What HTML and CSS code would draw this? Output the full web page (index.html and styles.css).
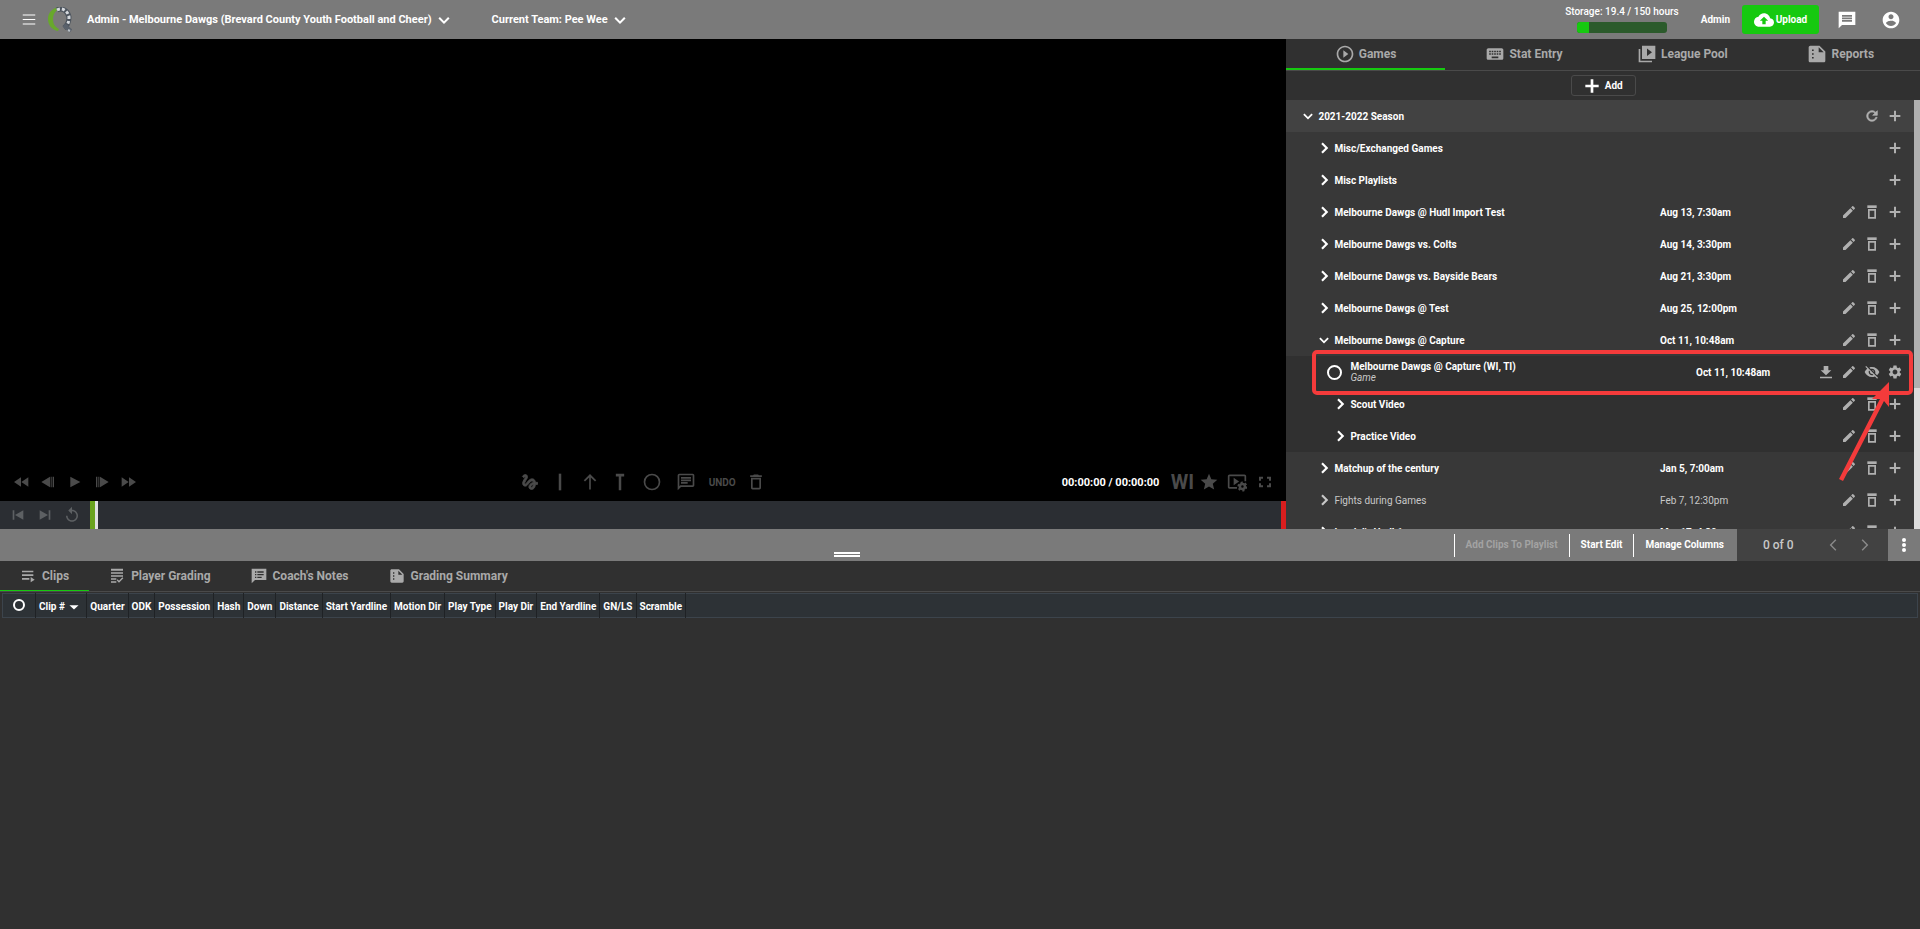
FILE: index.html
```html
<!DOCTYPE html>
<html lang="en">
<head>
  <meta charset="UTF-8">
  <meta name="viewport" content="width=device-width, initial-scale=1.0">
  <title>Game Video</title>
  <link rel="stylesheet" href="styles.css">
</head>
<body>
  <!-- Icon sprite -->
  <svg class="sprite" aria-hidden="true">
    <symbol id="menu" viewBox="0 0 24 24"><path d="M2 4h20v1.600H2zM2 11.200h20v1.600H2zM2 18.400h20V20H2z"/></symbol>
    <symbol id="down" viewBox="0 0 24 24"><path d="M2.500 9.500 5 7l7 7 7-7 2.500 2.500L12 19z"/></symbol>
    <symbol id="right" viewBox="0 0 24 24"><path d="M6.500 4 9.500 1l11 11-11 11-3-3 8-8z"/></symbol>
    <symbol id="cloud" viewBox="0 0 24 24"><path d="M19.350 10.040C18.670 6.590 15.640 4 12 4 9.110 4 6.600 5.640 5.350 8.040 2.340 8.360 0 10.910 0 14c0 3.310 2.690 6 6 6h13c2.760 0 5-2.240 5-5 0-2.640-2.050-4.780-4.650-4.960zM14 13v4h-4v-4H7l5-5 5 5h-3z"/></symbol>
    <symbol id="chat" viewBox="0 0 24 24"><path d="M22 2H2v20l4-4h16V2zM6 9h12v2H6V9zm12 5H6v-2h12v2zm0-6H6V6h12v2z"/></symbol>
    <symbol id="account" viewBox="0 0 24 24"><path d="M12 2C6.480 2 2 6.480 2 12s4.480 10 10 10 10-4.480 10-10S17.520 2 12 2zm0 3c1.660 0 3 1.340 3 3s-1.340 3-3 3-3-1.340-3-3 1.340-3 3-3zm0 14.200c-2.500 0-4.710-1.280-6-3.220.030-1.990 4-3.080 6-3.080 1.990 0 5.970 1.090 6 3.080-1.290 1.940-3.500 3.220-6 3.220z"/></symbol>
    <symbol id="play-circle" viewBox="0 0 24 24"><path d="M10 16.500l6-4.500-6-4.500v9zM12 2C6.480 2 2 6.480 2 12s4.480 10 10 10 10-4.480 10-10S17.520 2 12 2zm0 18c-4.410 0-8-3.590-8-8s3.590-8 8-8 8 3.590 8 8-3.590 8-8 8z"/></symbol>
    <symbol id="keyboard" viewBox="0 0 24 24"><path d="M20 5H4c-1.100 0-2 .9-2 2v10c0 1.100.9 2 2 2h16c1.100 0 2-.9 2-2V7c0-1.100-.9-2-2-2zm-9 3h2v2h-2V8zm0 3h2v2h-2v-2zM8 8h2v2H8V8zm0 3h2v2H8v-2zm-1 2H5v-2h2v2zm0-3H5V8h2v2zm9 7H8v-2h8v2zm0-4h-2v-2h2v2zm0-3h-2V8h2v2zm3 3h-2v-2h2v2zm0-3h-2V8h2v2z"/></symbol>
    <symbol id="library" viewBox="0 0 24 24"><path d="M4 6H2v16h16v-2H4V6zm18-4H6v16h16V2zM12 14.500v-9l6 4.500-6 4.500z"/></symbol>
    <symbol id="report" viewBox="0 0 24 24"><path d="M15 2H4C2.900 2 2 2.900 2 4v16c0 1.100.9 2 2 2h16c1.100 0 2-.9 2-2V9l-7-7zM8 17.500H6v-2h2zM8 13H6v-2h2zM8 8.500H6v-2h2zM14 10V4l6 6z"/></symbol>
    <symbol id="plus" viewBox="0 0 24 24"><path d="M20 13.500h-6.500V20h-3v-6.500H4v-3h6.500V4h3v6.500H20z"/></symbol>
    <symbol id="plus-bold" viewBox="0 0 24 24"><path d="M22 14h-8v8h-4v-8H2v-4h8V2h4v8h8z"/></symbol>
    <symbol id="refresh" viewBox="0 0 24 24"><path d="M17.650 6.350C16.200 4.900 14.210 4 12 4c-4.420 0-7.990 3.580-7.990 8s3.570 8 7.990 8c3.730 0 6.840-2.550 7.730-6h-2.080c-.82 2.330-3.040 4-5.650 4-3.310 0-6-2.690-6-6s2.690-6 6-6c1.660 0 3.140.69 4.220 1.780L13 11h7V4l-2.350 2.350z" stroke="currentColor"/></symbol>
    <symbol id="pencil" viewBox="0 0 24 24"><path d="M3 17.250V21h3.750L17.810 9.940l-3.750-3.750L3 17.250zM20.710 7.040c.39-.39.39-1.020 0-1.410l-2.340-2.340c-.39-.39-1.020-.39-1.410 0l-1.830 1.830 3.750 3.750 1.830-1.830z"/></symbol>
    <symbol id="trash" viewBox="0 0 24 24"><path d="M6 19c0 1.100.9 2 2 2h8c1.100 0 2-.9 2-2V7H6v12zM8 9h8v10H8V9zm7.500-5l-1-1h-5l-1 1H5v2h14V4z"/></symbol>
    <symbol id="trash-square" viewBox="0 0 24 24"><path d="M5 2h14v4H5z"/><path fill-rule="evenodd" d="M6 7.500h12V22H6zM8.500 10v9.500h7V10z"/></symbol>
    <symbol id="download" viewBox="0 0 24 24"><path d="M20 9.500h-4.500V3h-7v6.500H4l8 7.500 8-7.500zM3 19v2.500h18V19H3z"/></symbol>
    <symbol id="eye-off" viewBox="0 0 24 24"><path d="M12 7c2.760 0 5 2.240 5 5 0 .65-.13 1.260-.36 1.830l2.920 2.920c1.510-1.260 2.700-2.890 3.430-4.750-1.730-4.390-6-7.500-11-7.500-1.400 0-2.740.25-3.980.7l2.160 2.160C10.740 7.130 11.350 7 12 7zM2 4.270l2.280 2.280.46.46C3.080 8.300 1.780 10.020 1 12c1.730 4.390 6 7.500 11 7.500 1.550 0 3.030-.3 4.380-.84l.42.42L19.730 22 21 20.730 3.270 3 2 4.270zM7.530 9.800l1.550 1.550c-.05.21-.08.43-.08.65 0 1.660 1.340 3 3 3 .22 0 .44-.03.65-.08l1.550 1.550c-.67.33-1.410.53-2.200.53-2.760 0-5-2.240-5-5 0-.79.2-1.530.53-2.200zm4.310-.78l3.150 3.150.02-.16c0-1.660-1.340-3-3-3l-.17.010z"/></symbol>
    <symbol id="gear" viewBox="0 0 24 24"><path d="M19.140 12.940c.04-.3.06-.61.06-.94 0-.32-.02-.64-.07-.94l2.030-1.580c.18-.14.23-.41.12-.61l-1.920-3.320c-.12-.22-.37-.29-.59-.22l-2.390.96c-.5-.38-1.030-.7-1.620-.94l-.36-2.540c-.04-.24-.24-.41-.48-.41h-3.840c-.24 0-.43.17-.47.41l-.36 2.540c-.59.24-1.130.57-1.620.94l-2.390-.96c-.22-.08-.47 0-.59.22L2.740 8.870c-.12.21-.08.47.12.61l2.030 1.580c-.05.3-.09.63-.09.94s.02.64.07.94l-2.030 1.580c-.18.14-.23.41-.12.61l1.920 3.320c.12.22.37.29.59.22l2.390-.96c.5.38 1.030.7 1.620.94l.36 2.540c.05.24.24.41.48.41h3.840c.24 0 .44-.17.47-.41l.36-2.540c.59-.24 1.130-.56 1.620-.94l2.390.96c.22.08.47 0 .59-.22l1.920-3.320c.12-.22.07-.47-.12-.61l-2.010-1.580zM12 15.600c-1.980 0-3.600-1.620-3.600-3.600s1.620-3.600 3.600-3.600 3.600 1.620 3.600 3.600-1.620 3.600-3.600 3.600z"/></symbol>
    <symbol id="rewind" viewBox="0 0 24 24"><path d="M12 19V5L1.500 12zM23 19V5l-10.500 7z"/></symbol>
    <symbol id="forward" viewBox="0 0 24 24"><path d="M1 19l10.500-7L1 5zM12 5v14l10.500-7z"/></symbol>
    <symbol id="frame-back" viewBox="0 0 24 24"><path d="M15 20V4L2 12zM16 4h1.500v16H16zM19 4h2v16h-2z"/></symbol>
    <symbol id="frame-next" viewBox="0 0 24 24"><path d="M9 20V4l13 8zM6.500 4H8v16H6.500zM3 4h2v16H3z"/></symbol>
    <symbol id="play" viewBox="0 0 24 24"><path d="M5 4v16l15-8z"/></symbol>
    <symbol id="skip-prev" viewBox="0 0 24 24"><path d="M4 5h2.500v14H4zM20 5v14L7.500 12z"/></symbol>
    <symbol id="skip-next" viewBox="0 0 24 24"><path d="M4 19l12.500-7L4 5zM17.500 5H20v14h-2.500z"/></symbol>
    <symbol id="replay" viewBox="0 0 24 24"><path d="M12 5V1L7 6l5 5V7c3.310 0 6 2.690 6 6s-2.690 6-6 6-6-2.690-6-6H4c0 4.420 3.580 8 8 8s8-3.580 8-8-3.580-8-8-8z"/></symbol>
    <symbol id="gesture" viewBox="0 0 24 24"><path stroke="currentColor" d="M4.590 6.890c.7-.71 1.400-1.350 1.710-1.220.5.200 0 1.030-.3 1.520-.25.42-2.860 3.890-2.860 6.310 0 1.280.48 2.340 1.340 2.980.75.56 1.740.73 2.640.46 1.070-.31 1.950-1.400 3.060-2.770 1.210-1.490 2.830-3.440 4.080-3.440 1.630 0 1.650 1.010 1.760 1.790-3.780.64-5.380 3.670-5.380 5.370 0 1.700 1.440 3.090 3.210 3.090 1.630 0 4.290-1.330 4.690-6.100H21v-2.500h-2.470c-.15-1.650-1.090-4.200-4.030-4.200-2.250 0-4.180 1.910-4.940 2.840-.58.73-2.060 2.480-2.290 2.720-.25.300-.68.840-1.110.840-.45 0-.72-.83-.36-1.920.35-1.090 1.400-2.860 1.850-3.520.78-1.140 1.300-1.920 1.300-3.280C8.950 3.690 7.310 3 6.440 3 5.120 3 3.970 4 3.720 4.250c-.36.36-.66.66-.88.93l1.750 1.710zm9.290 11.660c-.31 0-.74-.26-.74-.72 0-.6.73-2.200 2.870-2.760-.300 2.690-1.430 3.480-2.130 3.480z"/></symbol>
    <symbol id="line" viewBox="0 0 24 24"><path d="M10.500 2h3v20h-3z"/></symbol>
    <symbol id="arrow-up" viewBox="0 0 24 24"><path d="M11 21h2V6.500l5 5 1.500-1.500L12 2.500 4.500 10 6 11.500l5-5z"/></symbol>
    <symbol id="letter-t" viewBox="0 0 24 24"><path d="M7 2h10v3.500h-3.500V22h-3V5.500H7z"/></symbol>
    <symbol id="circle" viewBox="0 0 24 24"><circle cx="12" cy="12" r="9" fill="none" stroke="currentColor" stroke-width="2"/></symbol>
    <symbol id="comment" viewBox="0 0 24 24"><path d="M20 2H4c-1.100 0-2 .9-2 2v18l4-4h14c1.100 0 2-.9 2-2V4c0-1.100-.9-2-2-2zm0 14H5.170L4 17.170V4h16v12zM6 12h8v2H6zM6 9h12v2H6zM6 6h12v2H6z"/></symbol>
    <symbol id="star" viewBox="0 0 24 24"><path d="M12 17.270L18.180 21l-1.640-7.030L22 9.240l-7.190-.61L12 2 9.190 8.630 2 9.240l5.460 4.730L5.820 21z"/></symbol>
    <symbol id="video-settings" viewBox="0 0 24 24"><path d="M3 5h18v6h2V5c0-1.100-.9-2-2-2H3c-1.100 0-2 .9-2 2v13c0 1.100.9 2 2 2h9v-2H3V5zM8 7v9l6.500-4.500z"/><circle cx="18.500" cy="17.500" r="3" fill="none" stroke="currentColor" stroke-width="3"/><circle cx="18.500" cy="17.500" r="5" fill="none" stroke="currentColor" stroke-width="2" stroke-dasharray="2.600 2.600"/></symbol>
    <symbol id="fullscreen" viewBox="0 0 24 24"><path d="M3 4h6v3H6v3H3zM15 4h6v6h-3V7h-3zM3 14h3v3h3v3H3zM18 14h3v6h-6v-3h3z"/></symbol>
    <symbol id="clips" viewBox="0 0 24 24"><path d="M3 4h17v2.500H3zM3 9.500h17V12H3zM3 15h11v2.500H3zM16 13.500v8l6-4z"/></symbol>
    <symbol id="grading" viewBox="0 0 24 24"><path d="M3 1h18v3H3zM3 6.500h18v2H3zM3 11h18v2H3zM3 15.500h8v2H3zM3 20h8v2H3zM15 22l-3.500-3.500L13 17l2 2 5-5 1.500 1.500z"/></symbol>
    <symbol id="notes" viewBox="0 0 24 24"><path fill-rule="evenodd" d="M23 1H1v22l5-5h17zM6 5h2v2H6zM9.500 5H19v2H9.500zM6 9h2v2H6zM9.500 9H19v2H9.500zM6 13h2v2H6zM9.500 13H16v2H9.500z"/></symbol>
    <symbol id="prev" viewBox="0 0 24 24"><path d="M15.500 3.500 17 5l-7 7 7 7-1.500 1.500L7 12z"/></symbol>
    <symbol id="next" viewBox="0 0 24 24"><path d="M8.500 3.500 7 5l7 7-7 7 1.500 1.500L17 12z"/></symbol>
    <symbol id="kebab" viewBox="0 0 24 24"><circle cx="12" cy="4.500" r="3"/><circle cx="12" cy="12" r="3"/><circle cx="12" cy="19.500" r="3"/></symbol>
    <symbol id="sort" viewBox="0 0 24 24"><path d="M1 8h22L12 18z"/></symbol>
  </svg>

  <header class="topbar">
    <button class="icon-btn menu-btn" aria-label="Menu"><svg><use href="#menu"/></svg></button>
    <a class="logo" href="#" aria-label="Home">
      <svg viewBox="0 0 24 26">
        <path d="M11 0C4 1 0 6 0 12c0 6 4 11 10 12l1-2c-4-2-6-5-6-10 0-4 2-8 6-10z" fill="#68a82c"/>
        <path d="M9 3c5-3 11 1 12 7 0 5-1 8-5 11" fill="none" stroke="#4c545d" stroke-width="5"/>
        <path d="M9 3c5-3 11 1 12 7 0 5-1 8-5 11" fill="none" stroke="#d5d9dd" stroke-width="3" stroke-dasharray="3 2"/>
        <path d="M16 18l7 6" stroke="#59616b" stroke-width="4"/>
        <path d="M20 23l2 1" stroke="#b9c0c6" stroke-width="2"/>
      </svg>
    </a>
    <button class="picker">Admin - Melbourne Dawgs (Brevard County Youth Football and Cheer)<svg><use href="#down"/></svg></button>
    <button class="picker team">Current Team: Pee Wee<svg><use href="#down"/></svg></button>
    <div class="storage">
      <span>Storage: 19.4 / 150 hours</span>
      <div class="storage-bar"><div class="storage-used" style="width: 13%"></div></div>
    </div>
    <a class="admin-link" href="#">Admin</a>
    <button class="upload"><svg><use href="#cloud"/></svg>Upload</button>
    <button class="icon-btn chat-btn" aria-label="Messages"><svg><use href="#chat"/></svg></button>
    <button class="icon-btn account-btn" aria-label="Account"><svg><use href="#account"/></svg></button>
  </header>

  <main class="workspace">
    <section class="player">
      <div class="screen"></div>
      <div class="controls">
        <div class="transport">
          <button aria-label="Rewind"><svg><use href="#rewind"/></svg></button>
          <button aria-label="Previous frame"><svg><use href="#frame-back"/></svg></button>
          <button aria-label="Play"><svg><use href="#play"/></svg></button>
          <button aria-label="Next frame"><svg><use href="#frame-next"/></svg></button>
          <button aria-label="Fast forward"><svg><use href="#forward"/></svg></button>
        </div>
        <div class="drawing">
          <button class="slim" aria-label="Freehand"><svg><use href="#gesture"/></svg></button>
          <button class="slim" aria-label="Line"><svg><use href="#line"/></svg></button>
          <button class="slim" aria-label="Arrow"><svg><use href="#arrow-up"/></svg></button>
          <button class="slim" aria-label="T line"><svg><use href="#letter-t"/></svg></button>
          <button aria-label="Circle"><svg><use href="#circle"/></svg></button>
          <button aria-label="Comment"><svg><use href="#comment"/></svg></button>
          <button class="undo">UNDO</button>
          <button class="slim" aria-label="Clear"><svg><use href="#trash"/></svg></button>
        </div>
        <div class="view">
          <span class="time">00:00:00 / 00:00:00</span>
          <button class="angle">WI</button>
          <button aria-label="Favorite"><svg><use href="#star"/></svg></button>
          <button aria-label="Video settings"><svg><use href="#video-settings"/></svg></button>
          <button aria-label="Fullscreen"><svg class="full"><use href="#fullscreen"/></svg></button>
        </div>
      </div>
      <div class="scrub">
        <div class="scrub-buttons">
          <button aria-label="Previous clip"><svg><use href="#skip-prev"/></svg></button>
          <button aria-label="Next clip"><svg><use href="#skip-next"/></svg></button>
          <button aria-label="Replay"><svg class="replay"><use href="#replay"/></svg></button>
        </div>
        <div class="track"></div>
      </div>
    </section>

    <aside class="library">
      <nav class="library-tabs">
        <a class="active" href="#"><svg><use href="#play-circle"/></svg>Games</a>
        <a href="#"><svg><use href="#keyboard"/></svg>Stat Entry</a>
        <a href="#"><svg><use href="#library"/></svg>League Pool</a>
        <a href="#"><svg><use href="#report"/></svg>Reports</a>
      </nav>
      <div class="add-bar">
        <button class="add"><svg><use href="#plus-bold"/></svg>Add</button>
      </div>
      <div class="tree-wrap">
        <div class="tree">
          <div class="row season">
            <button class="name"><svg><use href="#down"/></svg>2021-2022 Season</button>
            <div class="actions">
              <button aria-label="Refresh"><svg><use href="#refresh"/></svg></button>
              <button aria-label="Add"><svg><use href="#plus"/></svg></button>
            </div>
          </div>
          <div class="row">
            <button class="name"><svg><use href="#right"/></svg>Misc/Exchanged Games</button>
            <div class="actions"><button aria-label="Add"><svg><use href="#plus"/></svg></button></div>
          </div>
          <div class="row">
            <button class="name"><svg><use href="#right"/></svg>Misc Playlists</button>
            <div class="actions"><button aria-label="Add"><svg><use href="#plus"/></svg></button></div>
          </div>
          <div class="row">
            <button class="name"><svg><use href="#right"/></svg>Melbourne Dawgs @ Hudl Import Test</button>
            <span class="date">Aug 13, 7:30am</span>
            <div class="actions">
              <button aria-label="Edit"><svg><use href="#pencil"/></svg></button>
              <button aria-label="Delete"><svg><use href="#trash-square"/></svg></button>
              <button aria-label="Add"><svg><use href="#plus"/></svg></button>
            </div>
          </div>
          <div class="row">
            <button class="name"><svg><use href="#right"/></svg>Melbourne Dawgs vs. Colts</button>
            <span class="date">Aug 14, 3:30pm</span>
            <div class="actions">
              <button aria-label="Edit"><svg><use href="#pencil"/></svg></button>
              <button aria-label="Delete"><svg><use href="#trash-square"/></svg></button>
              <button aria-label="Add"><svg><use href="#plus"/></svg></button>
            </div>
          </div>
          <div class="row">
            <button class="name"><svg><use href="#right"/></svg>Melbourne Dawgs vs. Bayside Bears</button>
            <span class="date">Aug 21, 3:30pm</span>
            <div class="actions">
              <button aria-label="Edit"><svg><use href="#pencil"/></svg></button>
              <button aria-label="Delete"><svg><use href="#trash-square"/></svg></button>
              <button aria-label="Add"><svg><use href="#plus"/></svg></button>
            </div>
          </div>
          <div class="row">
            <button class="name"><svg><use href="#right"/></svg>Melbourne Dawgs @ Test</button>
            <span class="date">Aug 25, 12:00pm</span>
            <div class="actions">
              <button aria-label="Edit"><svg><use href="#pencil"/></svg></button>
              <button aria-label="Delete"><svg><use href="#trash-square"/></svg></button>
              <button aria-label="Add"><svg><use href="#plus"/></svg></button>
            </div>
          </div>
          <div class="row">
            <button class="name"><svg><use href="#down"/></svg>Melbourne Dawgs @ Capture</button>
            <span class="date">Oct 11, 10:48am</span>
            <div class="actions">
              <button aria-label="Edit"><svg><use href="#pencil"/></svg></button>
              <button aria-label="Delete"><svg><use href="#trash-square"/></svg></button>
              <button aria-label="Add"><svg><use href="#plus"/></svg></button>
            </div>
          </div>
          <div class="row child game">
            <label class="game-name">
              <input class="round" type="checkbox">
              <span>Melbourne Dawgs @ Capture (WI, TI)<em>Game</em></span>
            </label>
            <span class="date">Oct 11, 10:48am</span>
            <div class="actions">
              <button aria-label="Download"><svg><use href="#download"/></svg></button>
              <button aria-label="Edit"><svg><use href="#pencil"/></svg></button>
              <button aria-label="Hide"><svg><use href="#eye-off"/></svg></button>
              <button aria-label="Settings"><svg><use href="#gear"/></svg></button>
            </div>
            <div class="callout"></div>
            <svg class="callout-arrow" viewBox="0 0 64 108">
              <path d="M55 4 38 21l8 0L5 101l4 2 41-80 5 6z"/>
            </svg>
          </div>
          <div class="row child">
            <button class="name"><svg><use href="#right"/></svg>Scout Video</button>
            <div class="actions">
              <button aria-label="Edit"><svg><use href="#pencil"/></svg></button>
              <button aria-label="Delete"><svg><use href="#trash-square"/></svg></button>
              <button aria-label="Add"><svg><use href="#plus"/></svg></button>
            </div>
          </div>
          <div class="row child">
            <button class="name"><svg><use href="#right"/></svg>Practice Video</button>
            <div class="actions">
              <button aria-label="Edit"><svg><use href="#pencil"/></svg></button>
              <button aria-label="Delete"><svg><use href="#trash-square"/></svg></button>
              <button aria-label="Add"><svg><use href="#plus"/></svg></button>
            </div>
          </div>
          <div class="row">
            <button class="name"><svg><use href="#right"/></svg>Matchup of the century</button>
            <span class="date">Jan 5, 7:00am</span>
            <div class="actions">
              <button aria-label="Edit"><svg><use href="#pencil"/></svg></button>
              <button aria-label="Delete"><svg><use href="#trash-square"/></svg></button>
              <button aria-label="Add"><svg><use href="#plus"/></svg></button>
            </div>
          </div>
          <div class="row muted">
            <button class="name"><svg><use href="#right"/></svg>Fights during Games</button>
            <span class="date">Feb 7, 12:30pm</span>
            <div class="actions">
              <button aria-label="Edit"><svg><use href="#pencil"/></svg></button>
              <button aria-label="Delete"><svg><use href="#trash-square"/></svg></button>
              <button aria-label="Add"><svg><use href="#plus"/></svg></button>
            </div>
          </div>
          <div class="row">
            <button class="name"><svg><use href="#right"/></svg>Landol's Hudl 1</button>
            <span class="date">Mar 17, 4:30pm</span>
            <div class="actions">
              <button aria-label="Edit"><svg><use href="#pencil"/></svg></button>
              <button aria-label="Delete"><svg><use href="#trash-square"/></svg></button>
              <button aria-label="Add"><svg><use href="#plus"/></svg></button>
            </div>
          </div>
        </div>
        <div class="scrollbar"><div class="thumb"></div></div>
      </div>
    </aside>
  </main>

  <div class="splitter">
    <div class="grip"></div>
    <div class="tools">
      <button disabled>Add Clips To Playlist</button>
      <button>Start Edit</button>
      <button>Manage Columns</button>
    </div>
    <div class="pager">
      <span>0 of 0</span>
      <button aria-label="Previous"><svg><use href="#prev"/></svg></button>
      <button aria-label="Next"><svg><use href="#next"/></svg></button>
    </div>
    <button class="more" aria-label="More"><svg><use href="#kebab"/></svg></button>
  </div>

  <section class="clips">
    <nav class="clip-tabs">
      <a class="active" href="#"><svg><use href="#clips"/></svg>Clips</a>
      <a href="#"><svg><use href="#grading"/></svg>Player Grading</a>
      <a href="#"><svg><use href="#notes"/></svg>Coach's Notes</a>
      <a href="#"><svg><use href="#report"/></svg>Grading Summary</a>
    </nav>
    <table class="clip-table">
      <thead>
        <tr>
          <th class="pick"><input class="round" type="checkbox" aria-label="Select all clips"></th>
          <th class="sorted">Clip # <svg><use href="#sort"/></svg></th>
          <th>Quarter</th>
          <th>ODK</th>
          <th>Possession</th>
          <th>Hash</th>
          <th>Down</th>
          <th>Distance</th>
          <th>Start Yardline</th>
          <th>Motion Dir</th>
          <th>Play Type</th>
          <th>Play Dir</th>
          <th>End Yardline</th>
          <th>GN/LS</th>
          <th>Scramble</th>
          <th class="rest"></th>
        </tr>
      </thead>
    </table>
  </section>
</body>
</html>
```

FILE: styles.css
```css
* {
  margin: 0;
  padding: 0;
  box-sizing: border-box;
}

html,
body {
  height: 100%;
}

body {
  display: flex;
  flex-direction: column;
  overflow: hidden;
  font-family: Roboto, "Liberation Sans", sans-serif;
  font-size: 10px;
  font-weight: 700;
  color: #fff;
  background: #303030;
}

button {
  display: flex;
  align-items: center;
  justify-content: center;
  font: inherit;
  color: inherit;
  background: none;
  border: 0;
  cursor: pointer;
}

a {
  color: inherit;
  text-decoration: none;
}

svg {
  display: block;
  flex: none;
  width: 16px;
  height: 16px;
  fill: currentColor;
}

.sprite {
  position: absolute;
  width: 0;
  height: 0;
}

/* Round tick boxes */
.round {
  appearance: none;
  display: block;
  flex: none;
  width: 12px;
  height: 12px;
  border: 2px solid #fff;
  border-radius: 50%;
}

/* Top bar */
.topbar {
  display: flex;
  align-items: center;
  flex: none;
  height: 39px;
  padding-left: 20px;
  background: #7a7a7a;
}

.logo {
  margin-left: 10px;
}

.logo svg {
  width: 24px;
  height: 26px;
}

.picker {
  gap: 5px;
  margin-left: 15px;
  font-size: 11px;
}

.picker svg {
  width: 14px;
  height: 14px;
}

.team {
  margin-left: 41px;
}

.storage {
  display: flex;
  flex-direction: column;
  align-items: center;
  gap: 5px;
  margin-left: auto;
  margin-right: 22px;
  font-weight: 500;
}

.storage-bar {
  width: 90px;
  height: 11px;
  overflow: hidden;
  background: #2b5a2b;
  border-radius: 3px;
}

.storage-used {
  height: 100%;
  background: #16c910;
}

.admin-link {
  margin-right: 12px;
}

.upload {
  gap: 2px;
  width: 77px;
  height: 29px;
  background: #16c910;
  border-radius: 3px;
}

.upload svg,
.icon-btn svg {
  width: 20px;
  height: 20px;
}

.icon-btn.menu-btn svg {
  width: 18px;
  height: 15px;
}

.chat-btn {
  width: 56px;
}

.account-btn {
  width: 32px;
  margin-right: 13px;
}

/* Video and library */
.workspace {
  display: flex;
  flex: 4 1 0;
  min-height: 0;
}

.player {
  display: flex;
  flex-direction: column;
  width: 67%;
  background: #000;
}

.screen {
  flex: 1;
}

.controls {
  display: grid;
  grid-template-columns: 1fr auto 1fr;
  align-items: center;
  height: 38px;
  padding: 0 7px;
  color: #4a4a4a;
}

.transport,
.drawing,
.view,
.scrub-buttons {
  display: flex;
  align-items: center;
}

.transport button,
.scrub-buttons button {
  width: 27px;
}

.drawing button {
  width: 34px;
}

.drawing .slim {
  width: 30px;
}

.drawing svg,
.view svg {
  width: 20px;
  height: 20px;
}

.view {
  justify-content: flex-end;
}

.view button {
  width: 28px;
}

.view .full {
  width: 16px;
  height: 16px;
}

.drawing .undo {
  width: 38px;
}

.time {
  margin-right: 10px;
  font-size: 11px;
  color: #fff;
}

.view .angle {
  width: 26px;
  font-size: 20px;
}

.scrub {
  display: flex;
  height: 28px;
  color: #5d6063;
  background: #2b2e33;
}

.scrub-buttons {
  width: 90px;
  padding-left: 4px;
}

.scrub-buttons .replay {
  width: 18px;
  height: 18px;
}

.track {
  flex: 1;
  border-left: 5px solid #6aa31d;
  border-right: 5px solid #d91e1e;
  box-shadow: inset 3px 0 #e0e0e0;
}

.library {
  display: flex;
  flex: 1;
  flex-direction: column;
  min-width: 0;
}

.library-tabs {
  display: grid;
  grid-template-columns: repeat(4, 1fr);
  height: 32px;
  font-size: 12px;
  color: #a9a9a9;
  border-bottom: 1px solid #4a4a4a;
}

.library-tabs a {
  display: flex;
  align-items: center;
  justify-content: center;
  gap: 4px;
  border-bottom: 2px solid transparent;
}

.library-tabs svg {
  width: 20px;
  height: 20px;
}

.library-tabs .active,
.clip-tabs .active {
  border-bottom-color: #16c910;
}

.add-bar {
  display: flex;
  align-items: center;
  justify-content: center;
  height: 29px;
}

.add {
  gap: 5px;
  width: 65px;
  height: 21px;
  border: 1px solid #4a4a4a;
  border-radius: 3px;
}

.tree-wrap {
  display: flex;
  flex: 1;
  min-height: 0;
}

.tree {
  flex: 1;
  overflow: hidden;
}

.scrollbar {
  width: 6px;
  background: #dcdcdc;
}

.thumb {
  height: 67%;
  background: #b0b0b0;
}

/* Tree rows, each level is 16px further in */
.row {
  display: flex;
  align-items: center;
  height: 32px;
  padding: 0 8px 0 32px;
  background: #383838;
}

.row.season {
  padding-left: 16px;
  background: #424242;
}

.row.child {
  padding-left: 48px;
  background: #303030;
}

.name {
  flex: 1;
  justify-content: flex-start;
  gap: 4px;
}

.name svg {
  width: 12px;
  height: 12px;
}

.date {
  width: 154px;
}

.actions {
  display: flex;
  justify-content: flex-end;
  width: 92px;
  color: #b0b0b0;
}

.actions button {
  width: 23px;
}

.muted {
  font-weight: 400;
  color: #c8c8c8;
}

.row.game {
  position: relative;
  padding-left: 41px;
}

.game .date {
  width: 118px;
}

.game-name {
  display: flex;
  flex: 1;
  align-items: center;
  gap: 8px;
}

.game-name .round {
  width: 15px;
  height: 15px;
}

.game-name em {
  display: block;
  font-weight: 400;
  color: #c8c8c8;
}

.callout {
  position: absolute;
  inset: -6px 1px -7px 26px;
  border: 4px solid #f43b3b;
  border-radius: 5px;
}

.callout-arrow {
  position: absolute;
  top: 22px;
  right: 16px;
  z-index: 2;
  width: 64px;
  height: 108px;
  fill: #f43b3b;
}

/* Grey bar between the two halves */
.splitter {
  position: relative;
  display: flex;
  align-items: center;
  justify-content: flex-end;
  flex: none;
  height: 32px;
  background: #7a7a7a;
}

.grip {
  position: absolute;
  bottom: 4px;
  left: 50%;
  width: 26px;
  height: 5px;
  margin-left: -126px;
  border: solid #fff;
  border-width: 2px 0;
}

.tools {
  display: flex;
  padding-right: 2px;
}

.tools button {
  height: 23px;
  padding: 0 11px 2px;
  border-left: 1px solid #fff;
}

.tools button:disabled {
  color: #a3a3a3;
}

.pager {
  display: flex;
  align-items: center;
  width: 151px;
  height: 100%;
  padding-left: 26px;
  font-size: 12px;
  font-weight: 500;
  color: #c8c8c8;
  background: #424242;
}

.pager span {
  flex: 1;
}

.pager button {
  width: 32px;
  color: #8a8a8a;
}

.pager button:last-child {
  margin-right: 7px;
}

.more {
  width: 32px;
}

/* Clip list */
.clips {
  flex: 3 1 0;
  min-height: 0;
}

.clip-tabs {
  display: flex;
  height: 31px;
  font-size: 12px;
  color: #a9a9a9;
  border-bottom: 1px solid #4a4a4a;
}

.clip-tabs a {
  display: flex;
  align-items: center;
  gap: 6px;
  padding: 0 20px;
  border-bottom: 1px solid transparent;
}

.clip-table {
  width: calc(100% - 4px);
  margin: 1px 2px;
  border-collapse: collapse;
  background: #2d3236;
  border: 1px solid #3c444c;
}

.clip-table th {
  height: 24px;
  padding: 2px 3px 0;
  white-space: nowrap;
  border-right: 1px solid #1f2225;
}

.clip-table .pick {
  padding: 0 10px 2px;
}

.clip-table .sorted svg {
  display: inline-block;
  width: 10px;
  height: 10px;
  margin: 0 4px 0 2px;
  vertical-align: middle;
}

.clip-table .rest {
  width: 100%;
  border-right: 0;
}
```
